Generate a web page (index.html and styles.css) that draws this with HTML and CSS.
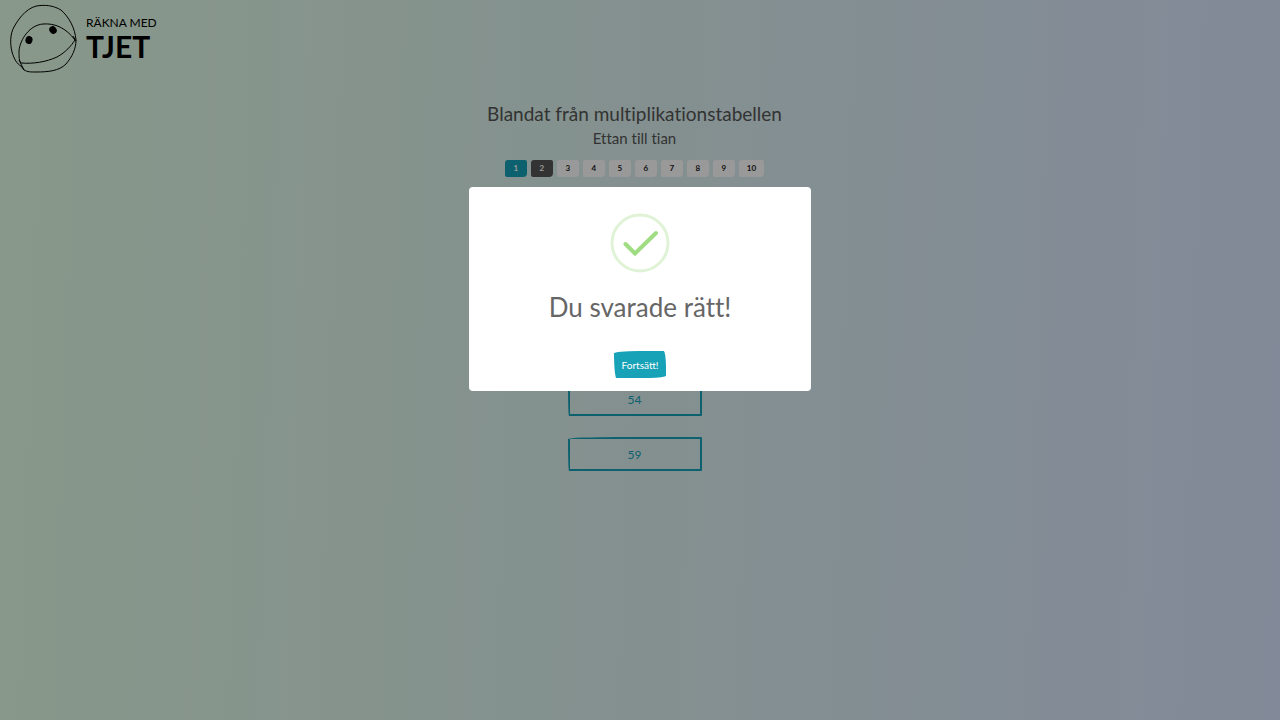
FILE: index.html
```
<!DOCTYPE html>
<html lang="sv">
<head>
  <meta charset="UTF-8">
  <meta name="viewport" content="width=device-width, initial-scale=1.0">
  <title>Räkna med Tjet</title>
  <link rel="stylesheet" href="styles.css">
</head>
<body>

<header>
  <a href="#" class="logo">
    <svg class="logo-face" viewBox="0 0 68 70" aria-hidden="true">
      <path d="M31 1.5C20 2 11 12 5 23C1 30 1 40 3 48C5 55 8 60 12 62L15 66C19 68 21 68 27 68C39 68 50 67 57 60C63 53 67 45 67 36C66 24 60 13 52 6C45 2 39 1 31 1.5Z"/>
      <path d="M66 36C57 24 46 19 34 20C21 21 11 35 10 47C10 53 10 57 12 59C24 60 37 58 48 53C57 48 62 42 66 36M64 32L67 37M10 56L15 66"/>
      <ellipse class="eye" cx="20" cy="36" rx="3" ry="3.5" transform="rotate(15 20 36)"/>
      <ellipse class="eye" cx="44" cy="26" rx="3" ry="3.5" transform="rotate(-35 44 26)"/>
    </svg>
    <span class="logo-text">
      <span class="logo-small">RÄKNA MED</span>
      <span class="logo-big">TJET</span>
    </span>
  </a>
</header>

<main>
  <h1>Blandat från multiplikationstabellen</h1>
  <h2>Ettan till tian</h2>
  <ol class="steps">
    <li class="done">1</li>
    <li class="current">2</li>
    <li>3</li>
    <li>4</li>
    <li>5</li>
    <li>6</li>
    <li>7</li>
    <li>8</li>
    <li>9</li>
    <li>10</li>
  </ol>
  <div class="answers">
    <button type="button" class="answer">54</button>
    <button type="button" class="answer">59</button>
  </div>
</main>

<div class="overlay">
  <div class="modal" role="dialog" aria-modal="true" aria-labelledby="modalTitle">
    <svg class="success" viewBox="0 0 60 60" aria-hidden="true">
      <circle cx="30" cy="30" r="28"/>
      <path d="M15.500 31L25 40.500L46 20"/>
    </svg>
    <p id="modalTitle" class="modal-title">Du svarade rätt!</p>
    <button type="button" class="continue">Fortsätt!</button>
  </div>
</div>

</body>
</html>
```
FILE: styles.css
```
body {
  font-family: Lato, "Open Sans", sans-serif;
  font-variant-ligatures: none;
  background: linear-gradient(92deg, #e3fde6, #dcf1f0 50%, #d9e6ff);
  color: #555;
  margin: 0;
  min-height: 100vh;
}

header {
  display: flex;
  padding: 4px 9px;
}

.logo {
  display: flex;
  align-items: center;
  gap: 9px;
  color: #000;
  text-decoration: none;
}

.logo-face {
  width: 68px;
  height: 70px;
  fill: none;
  stroke: #000;
  stroke-width: 1;
}

.logo-face .eye {
  fill: #000;
}

.logo-text {
  display: flex;
  flex-direction: column;
}

.logo-small {
  font-size: 12px;
  line-height: 14px;
}

.logo-big {
  font-size: 30px;
  font-weight: bold;
  line-height: 32px;
}

main {
  display: flex;
  flex-direction: column;
  align-items: center;
  padding: 24px 11px 24px 0;
}

h1 {
  font-size: 19px;
  font-weight: normal;
  line-height: 24px;
  margin: 0;
}

h2 {
  font-size: 15px;
  font-weight: normal;
  line-height: 24px;
  margin: 0;
}

.steps {
  display: flex;
  gap: 4px;
  list-style: none;
  margin: 10px 0 0;
  padding: 0;
}

.steps li {
  background-color: #fff;
  border-radius: 3px 2px 4px 2px;
  color: #222;
  font-size: 8px;
  font-weight: bold;
  line-height: 17px;
  min-width: 6px;
  padding: 0 8px;
  text-align: center;
}

.steps .done {
  background-color: #17a2b8;
  color: #fff;
}

.steps .current {
  background-color: #555;
  color: #fff;
}

.answers {
  display: flex;
  flex-direction: column;
  gap: 21px;
  margin-top: 205px;
}

.answer {
  background: none;
  border: 2px solid #17a2b8;
  border-radius: 50px 1px 1px 1px / 2px 1px 1px 30px;
  color: #17a2b8;
  cursor: pointer;
  font-family: inherit;
  font-size: 12px;
  height: 34px;
  width: 134px;
}

.overlay {
  position: fixed;
  inset: 0;
  background-color: rgba(0, 0, 0, 0.4);
  display: flex;
  align-items: flex-start;
  justify-content: center;
  padding-top: 187px;
}

.modal {
  background-color: #fff;
  border-radius: 4px;
  box-sizing: border-box;
  display: flex;
  flex-direction: column;
  align-items: center;
  max-width: 342px;
  padding: 26px 16px 13px;
  width: 100%;
}

.success {
  fill: none;
  height: 60px;
  width: 60px;
}

.success circle {
  stroke: #e0f3d7;
  stroke-width: 3;
}

.success path {
  stroke: #a0dc82;
  stroke-linecap: round;
  stroke-width: 4;
}

.modal-title {
  color: #666;
  font-size: 26px;
  line-height: 32px;
  margin: 18px 0 28px;
}

.continue {
  background-color: #17a2b8;
  border: none;
  border-radius: 30px 3px 20px 3px / 3px 20px 3px 30px;
  color: #fff;
  cursor: pointer;
  font-family: inherit;
  font-size: 10px;
  height: 27px;
  padding: 0 8px;
}
```
